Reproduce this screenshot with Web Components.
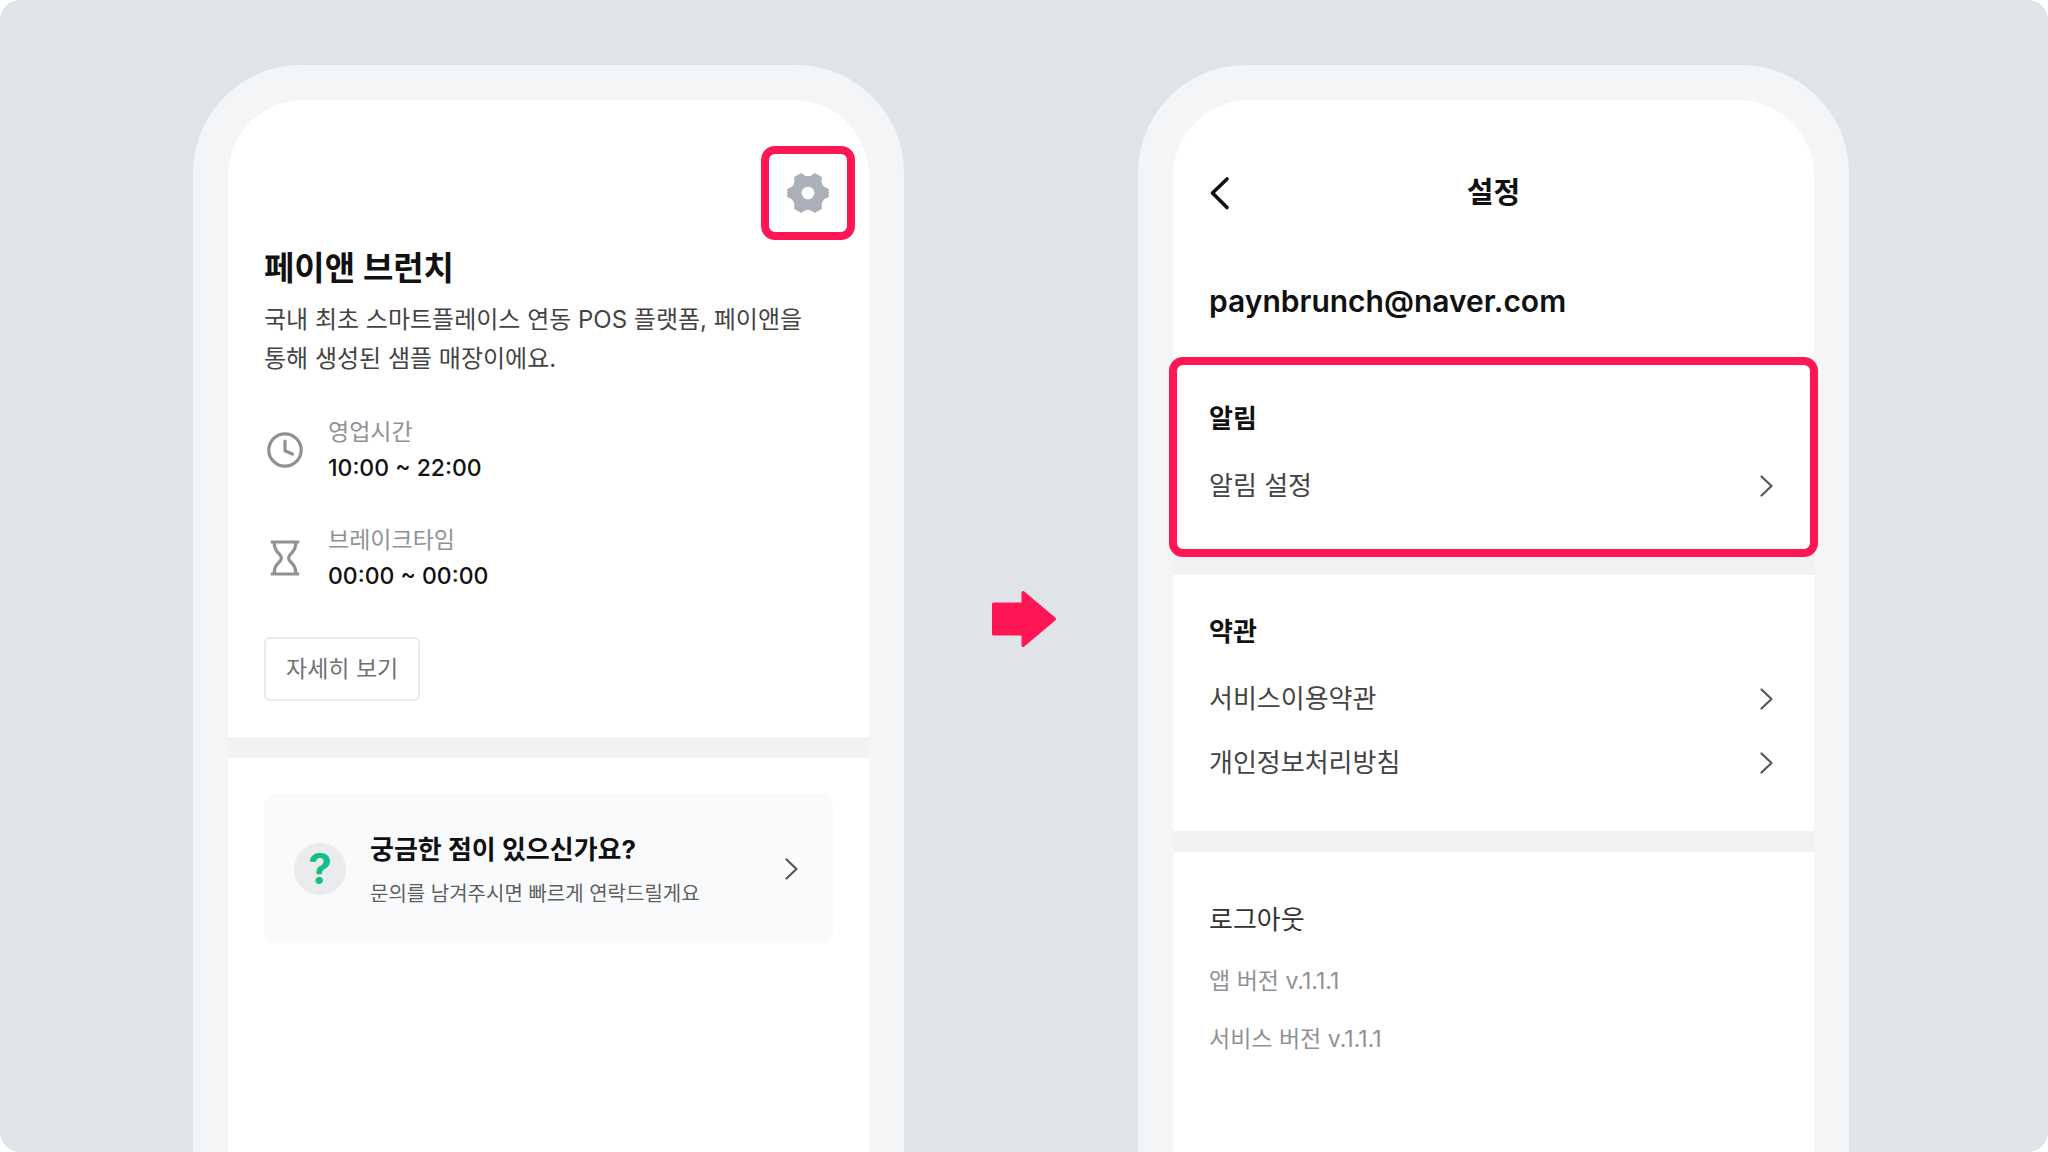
<!DOCTYPE html>
<html lang="ko">
<head>
<meta charset="utf-8">
<meta name="viewport" content="width=device-width, initial-scale=1">
<title>알림 설정</title>
<style>
	:root {
		--stage: #e0e4e9;
		--bezel: #f3f5f7;
		--divider: #f0f2f4;
		--accent: #ff1655;
		--text: #111;
		--text-sub: #444;
		--text-muted: #8f9194;
		--gutter: 36px;
	}
	body {
		margin: 0;
		background: #fff;
		color: var(--text);
		font-family: Inter, "Noto Sans CJK KR", sans-serif;
		font-size: 26px;
		line-height: 40px;
	}
</style>
</head>
<body>

<guide-stage>
	<phone-frame>
		<store-header>
			<mark-box slot="action"><icon-button label="설정" icon="gear"></icon-button></mark-box>
			<span slot="name">페이앤 브런치</span>
			<span slot="desc">국내 최초 스마트플레이스 연동 POS 플랫폼, 페이앤을 통해 생성된 샘플 매장이에요.</span>
			<info-row icon="clock" label="영업시간">10:00 ~ 22:00</info-row>
			<info-row icon="hourglass" label="브레이크타임">00:00 ~ 00:00</info-row>
			<outline-button slot="more">자세히 보기</outline-button>
		</store-header>
		<help-card>
			<span slot="title">궁금한 점이 있으신가요?</span>
			<span slot="sub">문의를 남겨주시면 빠르게 연락드릴게요</span>
		</help-card>
	</phone-frame>

	<step-arrow slot="arrow"></step-arrow>

	<phone-frame slot="after">
		<nav-bar>설정</nav-bar>
		<account-email>paynbrunch@naver.com</account-email>
		<menu-section heading="알림" marked>
			<menu-link>알림 설정</menu-link>
		</menu-section>
		<menu-section heading="약관">
			<menu-link>서비스이용약관</menu-link>
			<menu-link>개인정보처리방침</menu-link>
		</menu-section>
		<menu-footer>
			<span slot="logout">로그아웃</span>
			<p>앱 버전 v.1.1.1</p>
			<p>서비스 버전 v.1.1.1</p>
		</menu-footer>
	</phone-frame>
</guide-stage>

<script>
const ICONS = {
	gear: `<svg width="42" height="42" viewBox="-21 -21 42 42" fill="#abb0b9" aria-hidden="true">
		<path stroke="#abb0b9" stroke-width="2" stroke-linejoin="round" d="M19.7-3.5C13.4-5.4 11.4-8.9 12.9-15.3L6.8-18.8C2-14.4-2-14.4-6.8-18.8L-12.9-15.3C-11.4-8.9-13.4-5.4-19.7-3.5V3.5C-13.4 5.4-11.4 8.9-12.9 15.3L-6.8 18.8C-2 14.4 2 14.4 6.8 18.8L12.9 15.3C11.4 8.9 13.4 5.4 19.7 3.5Z"/>
		<circle r="6.3" fill="#fff"/></svg>`,
	clock: `<svg width="42" height="42" viewBox="-21 -21 42 42" fill="none" stroke="#8f9295" stroke-width="3.2" stroke-linecap="round" stroke-linejoin="round" aria-hidden="true">
		<circle r="16.2"/><path d="M0-9V.8L7.4 4"/></svg>`,
	hourglass: `<svg width="42" height="42" viewBox="-21 -21 42 42" fill="none" stroke="#8f9295" stroke-width="3.2" aria-hidden="true">
		<path d="M-14.2-16H14.2M-14.2 16H14.2M-10.8-15C-10.8-4.5-3.6-5-3.6 0S-10.8 4.5-10.8 15M10.8-15C10.8-4.5 3.6-5 3.6 0S10.8 4.5 10.8 15"/></svg>`,
	next: `<svg width="24" height="24" viewBox="0 0 24 24" fill="none" stroke="#555" stroke-width="2.2" stroke-linecap="round" stroke-linejoin="round" aria-hidden="true">
		<path d="M7.5 2.5L17.5 12L7.5 21.5"/></svg>`,
	back: `<svg width="24" height="40" viewBox="0 0 24 40" fill="none" stroke="#111" stroke-width="3.6" stroke-linecap="round" stroke-linejoin="round" aria-hidden="true">
		<path d="M18 6L3.5 20L18 34.5"/></svg>`
};

const BASE = `
	*, *::before, *::after { box-sizing: border-box; }
	:host { display: block; }
	svg { display: block; flex: none; }
	h1, h2, h3, p { margin: 0; }
	button { margin: 0; padding: 0; border: 0; background: none; color: inherit; font: inherit; cursor: pointer; }
	a { color: inherit; text-decoration: none; }
	:focus-visible { outline: 3px solid var(--accent); outline-offset: 2px; }
`;

class BaseElement extends HTMLElement {
	constructor() {
		super();
		this.attachShadow({ mode: 'open' });
	}
	connectedCallback() {
		this.shadowRoot.innerHTML = `<style>${BASE}${this.styles()}</style>${this.render()}`;
	}
	styles() { return ''; }
	render() { return '<slot></slot>'; }
}

/* Layout */

class GuideStage extends BaseElement {
	styles() {
		return `
			main {
				display: grid;
				grid-template-columns: minmax(0, 711px) minmax(80px, 234px) minmax(0, 711px);
				justify-content: center;
				min-height: 100vh;
				padding: 65px 6px 0 0;
				background: var(--stage);
				border-radius: 20px;
			}
			div { display: grid; }
			.arrow { place-items: center; padding: 20px 0 0 6px; }
		`;
	}
	render() {
		return `<main>
			<div><slot></slot></div>
			<div class="arrow"><slot name="arrow"></slot></div>
			<div><slot name="after"></slot></div>
		</main>`;
	}
}

class PhoneFrame extends BaseElement {
	styles() {
		return `
			:host {
				padding: 35px 35px 0;
				background: var(--bezel);
				border-radius: 108px 108px 0 0;
			}
			.screen {
				height: 100%;
				background: #fff;
				border-radius: 76px 76px 0 0;
			}
		`;
	}
	render() { return `<div class="screen"><slot></slot></div>`; }
}

class StepArrow extends BaseElement {
	render() {
		return `<svg width="64" height="58" viewBox="0 0 64 58" fill="#ff1655" stroke="#ff1655" stroke-width="3" stroke-linejoin="round" aria-hidden="true">
			<path d="M1.5 14H31V2.5L62.5 29L31 55.5V44H1.5Z"/></svg>`;
	}
}

/* Red frame that points at a control */
class MarkBox extends BaseElement {
	styles() {
		return `
			:host {
				border: 8px solid var(--accent);
				border-radius: 14px;
			}
		`;
	}
}

class IconButton extends BaseElement {
	styles() { return `button { display: grid; place-items: center; width: 78px; height: 78px; }`; }
	render() {
		return `<button type="button" aria-label="${this.getAttribute('label')}">${ICONS[this.getAttribute('icon')]}</button>`;
	}
}

class OutlineButton extends BaseElement {
	styles() {
		return `
			button {
				height: 64px;
				padding: 0 20px;
				border: 2px solid #e9eaec;
				border-radius: 6px;
				color: #6f7174;
				font-size: 23px;
			}
		`;
	}
	render() { return `<button type="button"><slot></slot></button>`; }
}

/* Store screen */

class StoreHeader extends BaseElement {
	styles() {
		return `
			section {
				padding: 46px var(--gutter) 36px;
				border-bottom: 21px solid var(--divider);
			}
			.action {
				display: flex;
				justify-content: flex-end;
				margin-right: -22px;
				margin-bottom: 8px;
			}
			h1 { font-size: 33px; line-height: 40px; font-weight: 700; }
			.desc {
				margin-top: 12px;
				color: var(--text-sub);
				font-size: 24px;
				line-height: 39px;
				word-break: keep-all;
			}
			.info { display: grid; gap: 36px; margin: 36px 0 43px; }
		`;
	}
	render() {
		return `<section>
			<div class="action"><slot name="action"></slot></div>
			<h1><slot name="name"></slot></h1>
			<p class="desc"><slot name="desc"></slot></p>
			<div class="info"><slot></slot></div>
			<slot name="more"></slot>
		</section>`;
	}
}

class InfoRow extends BaseElement {
	styles() {
		return `
			:host { display: flex; align-items: center; gap: 22px; }
			p { font-size: 23px; line-height: 36px; }
			.label { color: var(--text-muted); }
			.value { font-weight: 500; }
		`;
	}
	render() {
		return `${ICONS[this.getAttribute('icon')]}
			<div>
				<p class="label">${this.getAttribute('label')}</p>
				<p class="value"><slot></slot></p>
			</div>`;
	}
}

class HelpCard extends BaseElement {
	styles() {
		return `
			:host { padding: 36px var(--gutter); }
			a {
				display: flex;
				align-items: center;
				gap: 24px;
				padding: 29px 30px;
				background: #f9fafc;
				border-radius: 12px;
			}
			.badge {
				display: grid;
				place-items: center;
				flex: none;
				width: 52px;
				height: 52px;
				border-radius: 50%;
				background: #e9ebed;
				color: #10c088;
				font-size: 42px;
				line-height: 52px;
				font-weight: 700;
			}
			.text { flex: 1; padding-top: 5px; }
			h2 { font-size: 26px; line-height: 44px; font-weight: 700; }
			p {
				color: #5c5e61;
				font-family: "Noto Sans CJK KR", sans-serif;
				font-size: 20px;
				line-height: 42px;
			}
		`;
	}
	render() {
		return `<a href="#help">
			<span class="badge">?</span>
			<div class="text">
				<h2><slot name="title"></slot></h2>
				<p><slot name="sub"></slot></p>
			</div>
			${ICONS.next}
		</a>`;
	}
}

/* Settings screen */

class NavBar extends BaseElement {
	styles() {
		return `
			:host { padding: 61px var(--gutter) 0; }
			header {
				display: grid;
				grid-template-columns: 1fr auto 1fr;
				align-items: center;
				height: 64px;
			}
			button { justify-self: start; }
			h1 { font-size: 29px; line-height: 40px; font-weight: 700; }
		`;
	}
	render() {
		return `<header>
			<button type="button" aria-label="뒤로">${ICONS.back}</button>
			<h1><slot></slot></h1>
		</header>`;
	}
}

class AccountEmail extends BaseElement {
	styles() {
		return `
			:host { padding: 56px var(--gutter) 41px; }
			p { font-size: 30px; line-height: 40px; font-weight: 600; }
		`;
	}
	render() { return `<p><slot></slot></p>`; }
}

class MenuSection extends BaseElement {
	styles() {
		return `
			:host { border-bottom: 21px solid var(--divider); }
			section { position: relative; padding: 37px var(--gutter) 36px; }
			h2 { margin-bottom: 15px; font-size: 26px; line-height: 40px; font-weight: 700; }
			mark-box { position: absolute; inset: -5px -4px -3px; pointer-events: none; }
		`;
	}
	render() {
		return `<section>
			<h2>${this.getAttribute('heading')}</h2>
			<slot></slot>
			${this.hasAttribute('marked') ? '<mark-box></mark-box>' : ''}
		</section>`;
	}
}

class MenuLink extends BaseElement {
	styles() {
		return `
			a {
				display: flex;
				align-items: center;
				justify-content: space-between;
				height: 64px;
				color: var(--text-sub);
			}
		`;
	}
	render() { return `<a href="#menu"><span><slot></slot></span>${ICONS.next}</a>`; }
}

class MenuFooter extends BaseElement {
	styles() {
		return `
			:host { padding: 36px var(--gutter); }
			button { display: block; height: 64px; color: #333; }
			::slotted(p) {
				margin: 0;
				color: var(--text-muted);
				font-size: 23px;
				line-height: 58px;
			}
		`;
	}
	render() { return `<button type="button"><slot name="logout"></slot></button><slot></slot>`; }
}

customElements.define('mark-box', MarkBox);
customElements.define('icon-button', IconButton);
customElements.define('outline-button', OutlineButton);
customElements.define('info-row', InfoRow);
customElements.define('store-header', StoreHeader);
customElements.define('help-card', HelpCard);
customElements.define('nav-bar', NavBar);
customElements.define('account-email', AccountEmail);
customElements.define('menu-link', MenuLink);
customElements.define('menu-section', MenuSection);
customElements.define('menu-footer', MenuFooter);
customElements.define('step-arrow', StepArrow);
customElements.define('phone-frame', PhoneFrame);
customElements.define('guide-stage', GuideStage);
</script>
</body>
</html>
